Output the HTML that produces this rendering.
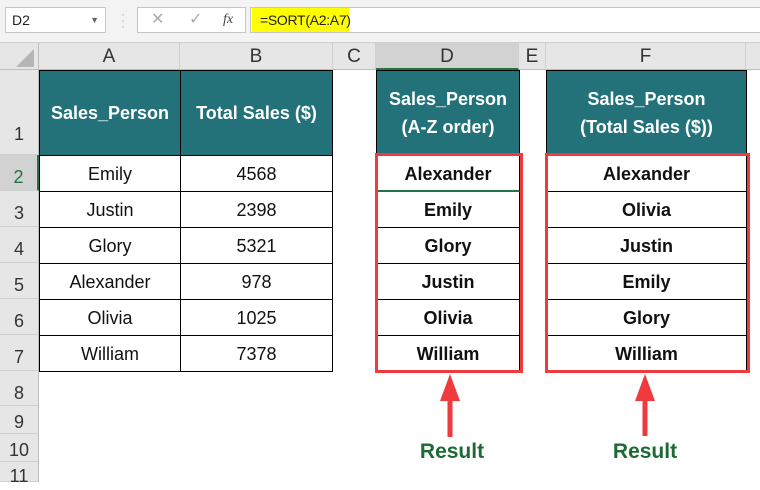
<!DOCTYPE html>
<html><head><style>
*{margin:0;padding:0;box-sizing:border-box}
body{width:760px;height:476px;overflow:hidden;background:#fff;font-family:"Liberation Sans",sans-serif;position:relative}
.a{position:absolute}
.hdr{background:#e6e6e6;color:#333;font-size:19px;text-align:center;line-height:27px;top:43px;height:27px;border-right:1px solid #cfcfcf;border-bottom:1px solid #bdbdbd}
.rn{background:#e6e6e6;color:#333;font-size:18px;left:0;width:39px;text-align:center;border-bottom:1px solid #cfcfcf;border-right:1px solid #bdbdbd}
.th{background:#237279;color:#fff;font-weight:bold;font-size:18px;text-align:center;display:flex;align-items:center;justify-content:center;line-height:28px;border:1px solid #000;top:70px;height:86px}
.c{border:1px solid #000;border-top:none;height:36px;line-height:36px;text-align:center;font-size:18px;color:#111}
.b{font-weight:bold}
.res{color:#1d6a35;font-weight:bold;font-size:21px;top:440px;width:100px;text-align:center;font-family:"Liberation Sans",sans-serif}
</style></head><body>
<div class="a" style="left:0;top:0;width:760px;height:43px;background:#f3f3f3;border-bottom:1px solid #d0d0d0"></div>
<div class="a" style="left:5px;top:7px;width:101px;height:26px;background:#fff;border:1px solid #c6c6c6;font-size:14px;line-height:24px;padding-left:6px;color:#222">D2<span style="position:absolute;right:6px;top:0;font-size:9px;color:#666">▼</span></div>
<div class="a" style="left:121px;top:11px;color:#aaa;font-size:12px;line-height:6px">·<br>·<br>·</div>
<div class="a" style="left:137px;top:7px;width:109px;height:26px;background:#fff;border:1px solid #c6c6c6;font-size:16px;line-height:24px;color:#aaa"><span style="position:absolute;left:13px">✕</span><span style="position:absolute;left:51px">✓</span><span style="position:absolute;left:85px;color:#444;font-family:'Liberation Serif',serif;font-style:italic;font-size:14px">fx</span></div>
<div class="a" style="left:250px;top:7px;width:515px;height:26px;background:#fff;border:1px solid #c6c6c6"></div>
<div class="a" style="left:252px;top:8px;width:97px;height:24px;background:#ffff00;font-size:14px;line-height:24px;padding-left:8px;color:#222;letter-spacing:-0.3px;white-space:nowrap">=SORT(A2:A7)</div>

<div class="a" style="left:0;top:43px;width:39px;height:27px;background:#e6e6e6;border-right:1px solid #bdbdbd;border-bottom:1px solid #bdbdbd"></div>
<div class="a" style="left:16px;top:49px;width:0;height:0;border-left:18px solid transparent;border-bottom:18px solid #b5b5b5"></div>
<div class="a hdr" style="left:39px;width:141px">A</div>
<div class="a hdr" style="left:180px;width:153px">B</div>
<div class="a hdr" style="left:333px;width:43px">C</div>
<div class="a hdr" style="left:376px;width:143px;background:#d2d2d2;border-bottom:2px solid #217346">D</div>
<div class="a hdr" style="left:519px;width:27px">E</div>
<div class="a hdr" style="left:546px;width:200px">F</div>
<div class="a hdr" style="left:746px;width:20px"></div>

<div class="a rn" style="top:70px;height:85px;line-height:128px">1</div>
<div class="a rn" style="top:155px;height:36px;line-height:44px;background:#d2d2d2;color:#217346;border-right:2px solid #217346">2</div>
<div class="a rn" style="top:191px;height:36px;line-height:44px">3</div>
<div class="a rn" style="top:227px;height:36px;line-height:44px">4</div>
<div class="a rn" style="top:263px;height:36px;line-height:44px">5</div>
<div class="a rn" style="top:299px;height:36px;line-height:44px">6</div>
<div class="a rn" style="top:335px;height:36px;line-height:44px">7</div>
<div class="a rn" style="top:371px;height:35px;line-height:44px">8</div>
<div class="a rn" style="top:406px;height:28px;line-height:32px">9</div>
<div class="a rn" style="top:434px;height:28px;line-height:32px">10</div>
<div class="a rn" style="top:462px;height:20px;line-height:28px">11</div>

<div class="a th" style="left:39px;width:142px">Sales_Person</div>
<div class="a th" style="left:180px;width:153px">Total Sales ($)</div>
<div class="a th" style="left:376px;width:144px">Sales_Person<br>(A-Z order)</div>
<div class="a th" style="left:546px;width:201px">Sales_Person<br>(Total Sales ($))</div>

<div class="a" style="left:39px;top:156px">
<div class="c" style="width:142px">Emily</div><div class="c" style="width:142px">Justin</div><div class="c" style="width:142px">Glory</div><div class="c" style="width:142px">Alexander</div><div class="c" style="width:142px">Olivia</div><div class="c" style="width:142px">William</div></div>
<div class="a" style="left:180px;top:156px">
<div class="c" style="width:153px">4568</div><div class="c" style="width:153px">2398</div><div class="c" style="width:153px">5321</div><div class="c" style="width:153px">978</div><div class="c" style="width:153px">1025</div><div class="c" style="width:153px">7378</div></div>
<div class="a b" style="left:376px;top:156px">
<div class="c" style="width:144px;border-bottom:2px solid #217346">Alexander</div><div class="c" style="width:144px">Emily</div><div class="c" style="width:144px">Glory</div><div class="c" style="width:144px">Justin</div><div class="c" style="width:144px">Olivia</div><div class="c" style="width:144px">William</div></div>
<div class="a b" style="left:546px;top:156px">
<div class="c" style="width:201px">Alexander</div><div class="c" style="width:201px">Olivia</div><div class="c" style="width:201px">Justin</div><div class="c" style="width:201px">Emily</div><div class="c" style="width:201px">Glory</div><div class="c" style="width:201px">William</div></div>

<div class="a" style="left:375px;top:153px;width:148px;height:220px;border:3px solid #ef3a3e"></div>
<div class="a" style="left:545px;top:153px;width:205px;height:220px;border:3px solid #ef3a3e"></div>

<svg class="a" style="left:0;top:0" width="760" height="476">
<polygon points="450,374 440,401 460,401" fill="#ef3a3e"/><rect x="447.5" y="399" width="5" height="38" fill="#ef3a3e"/>
<polygon points="645,374 635,401 655,401" fill="#ef3a3e"/><rect x="642.5" y="399" width="5" height="37" fill="#ef3a3e"/>
</svg>
<div class="a res" style="left:402px">Result</div>
<div class="a res" style="left:595px">Result</div>
</body></html>
